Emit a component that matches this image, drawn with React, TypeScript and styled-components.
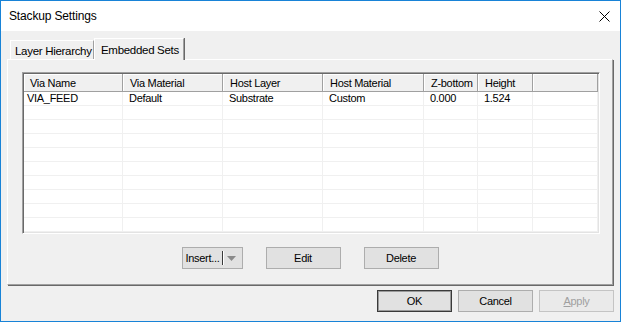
import React from "react";
import styled, { createGlobalStyle } from "styled-components";

const Global = createGlobalStyle`
  html, body { margin: 0; padding: 0; background: #ffffff; }
  * { box-sizing: border-box; }
  body { font-family: "Liberation Sans", Arial, sans-serif; font-size: 11px; color: #000; letter-spacing: -0.3px; }
`;

const Window = styled.div`
  width: 621px;
  height: 322px;
  border: 1px solid #1883d7;
  display: flex;
  flex-direction: column;
  background: #f0f0f0;
`;

const TitleBar = styled.div`
  height: 30px;
  background: #ffffff;
  display: flex;
  align-items: center;
  justify-content: space-between;
  padding: 0 10px 0 8px;
  flex: none;
`;

const Title = styled.span`
  font-size: 12px;
  letter-spacing: -0.15px;
  color: #000;
`;

const CloseIcon = styled.svg`
  width: 11px;
  height: 11px;
`;

const Body = styled.div`
  flex: 1;
  display: flex;
  flex-direction: column;
  padding: 7px 6px 0 6px;
`;

const TabStrip = styled.div`
  display: flex;
  align-items: flex-end;
  height: 21px;
  padding-left: 3px;
  position: relative;
  z-index: 2;
`;

const Tab = styled.div<{ $active?: boolean }>`
  height: ${(p) => (p.$active ? "22px" : "19px")};
  margin-bottom: ${(p) => (p.$active ? "-1px" : "0")};
  width: ${(p) => (p.$active ? "90px" : "84px")};
  padding-left: ${(p) => (p.$active ? "6px" : "4px")};
  padding-top: ${(p) => (p.$active ? "0" : "2px")};
  display: flex;
  align-items: center;
  background: #f0f0f0;
  border-top: 1px solid #ffffff;
  border-left: 1px solid #ffffff;
  border-right: 1px solid #a0a0a0;
  box-shadow: 1px 0 0 #696969;
  font-size: 11.5px;
  white-space: nowrap;
  overflow: hidden;
`;

const Panel = styled.div`
  height: 226px;
  width: 606px;
  border-top: 1px solid #ffffff;
  border-left: 1px solid #ffffff;
  border-right: 1px solid #a0a0a0;
  border-bottom: 1px solid #a0a0a0;
  box-shadow: 1px 1px 0 #696969;
  display: flex;
  flex-direction: column;
  padding: 12px 12px 0 14px;
  position: relative;
  z-index: 1;
`;

const ListFrame = styled.div`
  width: 578px;
  height: 162px;
  border-top: 1px solid #a0a0a0;
  border-left: 1px solid #a0a0a0;
  border-right: 1px solid #ffffff;
  border-bottom: 1px solid #ffffff;
  box-shadow: inset 1px 1px 0 #696969, inset -1px -1px 0 #e3e3e3;
  padding: 1px;
  background: #ffffff;
  overflow: hidden;
`;

const Grid = styled.div`
  display: grid;
  grid-template-columns: 99px 100px 100px 101px 54px 55px 1fr;
  grid-auto-rows: 14px;
  grid-template-rows: 18px;
`;

const HeadCell = styled.div<{ $first?: boolean }>`
  background: #f0f0f0;
  border-right: 1px solid #a0a0a0;
  border-bottom: 1px solid #a0a0a0;
  box-shadow: inset 1px 1px 0 #ffffff;
  padding-left: ${(p) => (p.$first ? "6px" : "7px")};
  display: flex;
  align-items: center;
  white-space: nowrap;
  overflow: hidden;
`;

const Cell = styled.div<{ $first?: boolean }>`
  border-right: 1px solid #f0f0f0;
  border-bottom: 1px solid #f0f0f0;
  padding-left: ${(p) => (p.$first ? "3px" : "6px")};
  display: flex;
  align-items: center;
  white-space: nowrap;
  overflow: hidden;
  line-height: 13px;
`;

const ActionRow = styled.div`
  display: flex;
  justify-content: center;
  gap: 23px;
  margin-top: 13px;
  padding-right: 2px;
`;

const Button = styled.button<{ $default?: boolean; $disabled?: boolean }>`
  width: 75px;
  height: 22px;
  font-family: "Liberation Sans", Arial, sans-serif;
  font-size: 11px;
  letter-spacing: -0.3px;
  background: ${(p) => (p.$disabled ? "#eaeaea" : "#e1e1e1")};
  color: ${(p) => (p.$disabled ? "#a0a0a0" : "#000")};
  border: 1px solid ${(p) => (p.$default ? "#3a3a3a" : p.$disabled ? "#c4c4c4" : "#adadad")};
  box-shadow: ${(p) => (p.$default ? "inset 0 0 0 1px #9a9a9a" : "none")};
  padding: 0;
  margin: 0;
  display: flex;
  align-items: center;
  justify-content: center;
`;

const SplitButton = styled.div`
  width: 61px;
  height: 22px;
  background: #e1e1e1;
  border: 1px solid #adadad;
  display: flex;
  align-items: center;
  font-size: 11px;
  padding-left: 3px;
`;

const SplitSep = styled.span`
  width: 1px;
  height: 14px;
  background: #3a3a3a;
  margin-left: 3px;
  box-shadow: 1px 0 0 #ffffff;
`;

const Arrow = styled.svg`
  width: 9px;
  height: 5px;
  margin-left: 4px;
`;

const Footer = styled.div`
  display: flex;
  justify-content: flex-end;
  gap: 6px;
  padding: 5px 0 0 0;
`;

const Underline = styled.span`
  text-decoration: underline;
`;

const headers = ["Via Name", "Via Material", "Host Layer", "Host Material", "Z-bottom", "Height", ""];
const data = [["VIA_FEED", "Default", "Substrate", "Custom", "0.000", "1.524", ""]];
const ROWS = 10;

export default function App() {
  const rows: string[][] = [];
  for (let i = 0; i < ROWS; i++) rows.push(data[i] || ["", "", "", "", "", "", ""]);
  return (
    <>
      <Global />
      <Window>
        <TitleBar>
          <Title>Stackup Settings</Title>
          <CloseIcon viewBox="0 0 11 11">
            <path d="M0.5 0.5 L10.5 10.5 M10.5 0.5 L0.5 10.5" stroke="#000" strokeWidth="1" fill="none" />
          </CloseIcon>
        </TitleBar>
        <Body>
          <TabStrip>
            <Tab>Layer Hierarchy</Tab>
            <Tab $active>Embedded Sets</Tab>
          </TabStrip>
          <Panel>
            <ListFrame>
              <Grid>
                {headers.map((h, i) => (
                  <HeadCell key={"h" + i} $first={i === 0}>
                    {h}
                  </HeadCell>
                ))}
                {rows.map((r, ri) =>
                  r.map((c, ci) => (
                    <Cell key={ri + "-" + ci} $first={ci === 0}>
                      {c}
                    </Cell>
                  ))
                )}
              </Grid>
            </ListFrame>
            <ActionRow>
              <SplitButton>
                Insert...
                <SplitSep />
                <Arrow viewBox="0 0 9 5">
                  <path d="M0 0 L9 0 L4.5 5 Z" fill="#8a8a8a" />
                </Arrow>
              </SplitButton>
              <Button>Edit</Button>
              <Button>Delete</Button>
            </ActionRow>
          </Panel>
          <Footer>
            <Button $default>OK</Button>
            <Button>Cancel</Button>
            <Button $disabled>
              <Underline>A</Underline>pply
            </Button>
          </Footer>
        </Body>
      </Window>
    </>
  );
}
